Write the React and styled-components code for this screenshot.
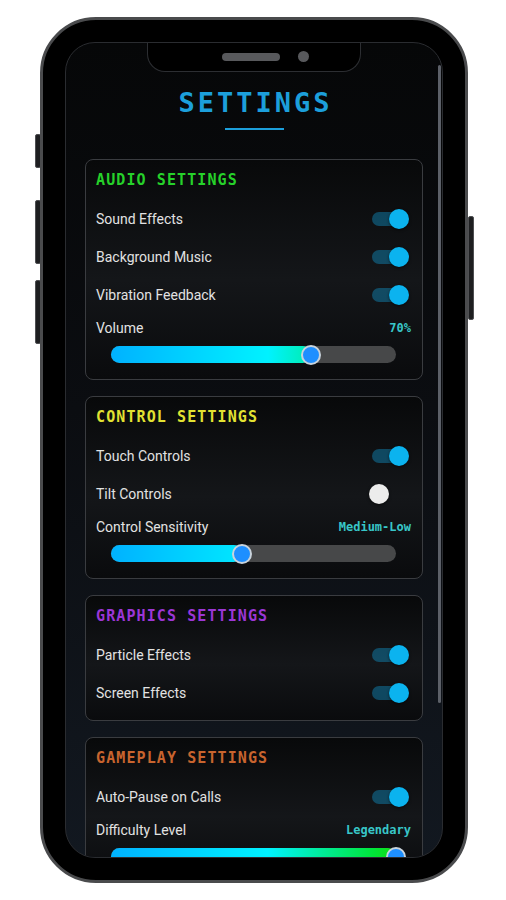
import React from "react"
import styled, { createGlobalStyle } from "styled-components"

const sections = [
  {
    title: "AUDIO SETTINGS",
    color: "#26d12a",
    toggles: [
      { label: "Sound Effects", on: true },
      { label: "Background Music", on: true },
      { label: "Vibration Feedback", on: true },
    ],
    slider: { label: "Volume", value: "70%", pct: 70 },
  },
  {
    title: "CONTROL SETTINGS",
    color: "#e2e232",
    toggles: [
      { label: "Touch Controls", on: true },
      { label: "Tilt Controls", on: false },
    ],
    slider: { label: "Control Sensitivity", value: "Medium-Low", pct: 46 },
  },
  {
    title: "GRAPHICS SETTINGS",
    color: "#9b36d6",
    toggles: [
      { label: "Particle Effects", on: true },
      { label: "Screen Effects", on: true },
    ],
  },
  {
    title: "GAMEPLAY SETTINGS",
    color: "#c8642e",
    toggles: [{ label: "Auto-Pause on Calls", on: true }],
    slider: { label: "Difficulty Level", value: "Legendary", pct: 100 },
  },
]

const Toggle = ({ on }) => (
  <Switch>
    <Track on={on ? 1 : 0}>
      <Thumb on={on ? 1 : 0} />
    </Track>
  </Switch>
)

const Slider = ({ label, value, pct }) => (
  <SliderGroup>
    <SliderHead>
      <Label>{label}</Label>
      <Value>{value}</Value>
    </SliderHead>
    <SliderTrack>
      <SliderFill style={{ width: `${pct}%`, backgroundSize: `${10000 / pct}% 100%` }} />
      <SliderThumb />
    </SliderTrack>
  </SliderGroup>
)

const App = () => (
  <>
    <GlobalStyle />
    <Stage>
      <Rail>
        <SideButton gap={114} len={32} />
        <SideButton gap={32} len={62} />
        <SideButton gap={16} len={62} />
      </Rail>
      <Phone>
        <Screen>
          <Notch>
            <Speaker />
            <Camera />
          </Notch>
          <ScrollThumb />
          <Content>
            <Title>SETTINGS</Title>
            <Underline />
            <Cards>
              {sections.map(s => (
                <Card key={s.title}>
                  <CardTitle color={s.color}>{s.title}</CardTitle>
                  {s.toggles.map(t => (
                    <Row key={t.label}>
                      <Label>{t.label}</Label>
                      <Toggle on={t.on} />
                    </Row>
                  ))}
                  {s.slider && <Slider {...s.slider} />}
                </Card>
              ))}
            </Cards>
          </Content>
        </Screen>
      </Phone>
      <Rail>
        <SideButton gap={196} len={102} />
      </Rail>
    </Stage>
  </>
)

export default App

const GlobalStyle = createGlobalStyle`
  body {
    margin: 0;
    background: #ffffff;
    font-family: Roboto, "Liberation Sans", sans-serif;
  }
`

const Stage = styled.div`
  display: flex;
  align-items: flex-start;
  width: 506px;
  height: 900px;
  padding: 17px 0 0 35px;
  box-sizing: border-box;
`

const Rail = styled.div`
  display: flex;
  flex-direction: column;
  width: 5px;
  padding-top: 3px;
`

const SideButton = styled.div`
  width: 4px;
  height: ${p => p.len}px;
  margin-top: ${p => p.gap}px;
  background: #1e1f21;
  border: 1px solid #4e4f52;
  border-radius: 2px;
`

const Phone = styled.div`
  width: 428px;
  height: 866px;
  box-sizing: border-box;
  padding: 22px;
  background: #000;
  border: 3px solid #4a4b4d;
  border-radius: 56px;
`

const Screen = styled.div`
  position: relative;
  height: 100%;
  box-sizing: border-box;
  overflow: hidden;
  border: 1px solid #2a2c30;
  border-radius: 30px;
  background: linear-gradient(180deg, #060708 0%, #0b0d11 45%, #121820 100%);
`

const Notch = styled.div`
  position: absolute;
  top: -1px;
  left: 50%;
  transform: translateX(-50%);
  width: 214px;
  height: 30px;
  display: flex;
  align-items: center;
  justify-content: center;
  gap: 18px;
  padding-left: 22px;
  box-sizing: border-box;
  background: #000;
  border: 1px solid #2c2e32;
  border-top: none;
  border-radius: 0 0 18px 18px;
  z-index: 2;
`

const Speaker = styled.div`
  width: 58px;
  height: 8px;
  border-radius: 4px;
  background: #58595c;
`

const Camera = styled.div`
  width: 11px;
  height: 11px;
  border-radius: 50%;
  background: #58595c;
`

const ScrollThumb = styled.div`
  position: absolute;
  top: 22px;
  right: 1px;
  width: 3px;
  height: 638px;
  border-radius: 2px;
  background: #5c6068;
  z-index: 2;
`

const Content = styled.div`
  padding: 45px 19px 0;
`

const Title = styled.h1`
  margin: 0;
  padding-left: 3px;
  text-align: center;
  font-family: "DejaVu Sans Mono", "Liberation Mono", monospace;
  font-weight: bold;
  font-size: 27px;
  line-height: 30px;
  letter-spacing: 3px;
  color: #1c9fdb;
`

const Underline = styled.div`
  width: 59px;
  height: 2px;
  margin: 10px auto 0;
  background: #1c9fdb;
`

const Cards = styled.div`
  display: flex;
  flex-direction: column;
  gap: 16px;
  margin-top: 29px;
`

const Card = styled.section`
  padding: 12px 11px 8px 10px;
  border: 1px solid #3a3c40;
  border-radius: 8px;
  background: linear-gradient(180deg, #08090a 0%, #141619 55%, #0a0b0d 100%);
`

const CardTitle = styled.h2`
  margin: 0 0 11px;
  font-family: "DejaVu Sans Mono", "Liberation Mono", monospace;
  font-weight: bold;
  font-size: 15px;
  line-height: 17px;
  letter-spacing: 1.1px;
  color: ${p => p.color};
`

const Row = styled.div`
  display: flex;
  align-items: center;
  justify-content: space-between;
  height: 38px;
`

const Label = styled.span`
  font-size: 14px;
  color: #e2e2e2;
`

const Switch = styled.span`
  display: flex;
  align-items: center;
  width: 40px;
  height: 20px;
  margin-right: 2px;
`

const Track = styled.span`
  display: flex;
  align-items: center;
  justify-content: ${p => (p.on ? "flex-end" : "flex-start")};
  width: 34px;
  height: 14px;
  margin: 0 3px;
  border-radius: 7px;
  background: ${p => (p.on ? "rgba(16, 150, 205, 0.42)" : "transparent")};
`

const Thumb = styled.span`
  flex-shrink: 0;
  width: 20px;
  height: 20px;
  margin: 0 -3px;
  border-radius: 50%;
  background: ${p => (p.on ? "#0bb3ef" : "#ececec")};
  box-shadow: 0 1px 3px rgba(0, 0, 0, 0.6);
`

const SliderGroup = styled.div`
  margin: 4px 0 8px;
`

const SliderHead = styled.div`
  display: flex;
  align-items: center;
  justify-content: space-between;
  height: 20px;
`

const Value = styled.span`
  font-family: "DejaVu Sans Mono", "Liberation Mono", monospace;
  font-weight: bold;
  font-size: 12px;
  color: #38c6c8;
`

const SliderTrack = styled.div`
  display: flex;
  align-items: center;
  height: 17px;
  margin: 8px 15px 0;
  border-radius: 9px;
  background: #474849;
`

const SliderFill = styled.div`
  flex-shrink: 0;
  align-self: stretch;
  border-radius: 9px;
  background-image: linear-gradient(90deg, #00b2ff 0%, #00f2ff 55%, #00e63a 92%, #12dd12 100%);
  background-repeat: no-repeat;
`

const SliderThumb = styled.div`
  flex-shrink: 0;
  width: 20px;
  height: 20px;
  margin: 0 -10px;
  box-sizing: border-box;
  border-radius: 50%;
  border: 2px solid #c9d3dc;
  background: #1e8fff;
`
